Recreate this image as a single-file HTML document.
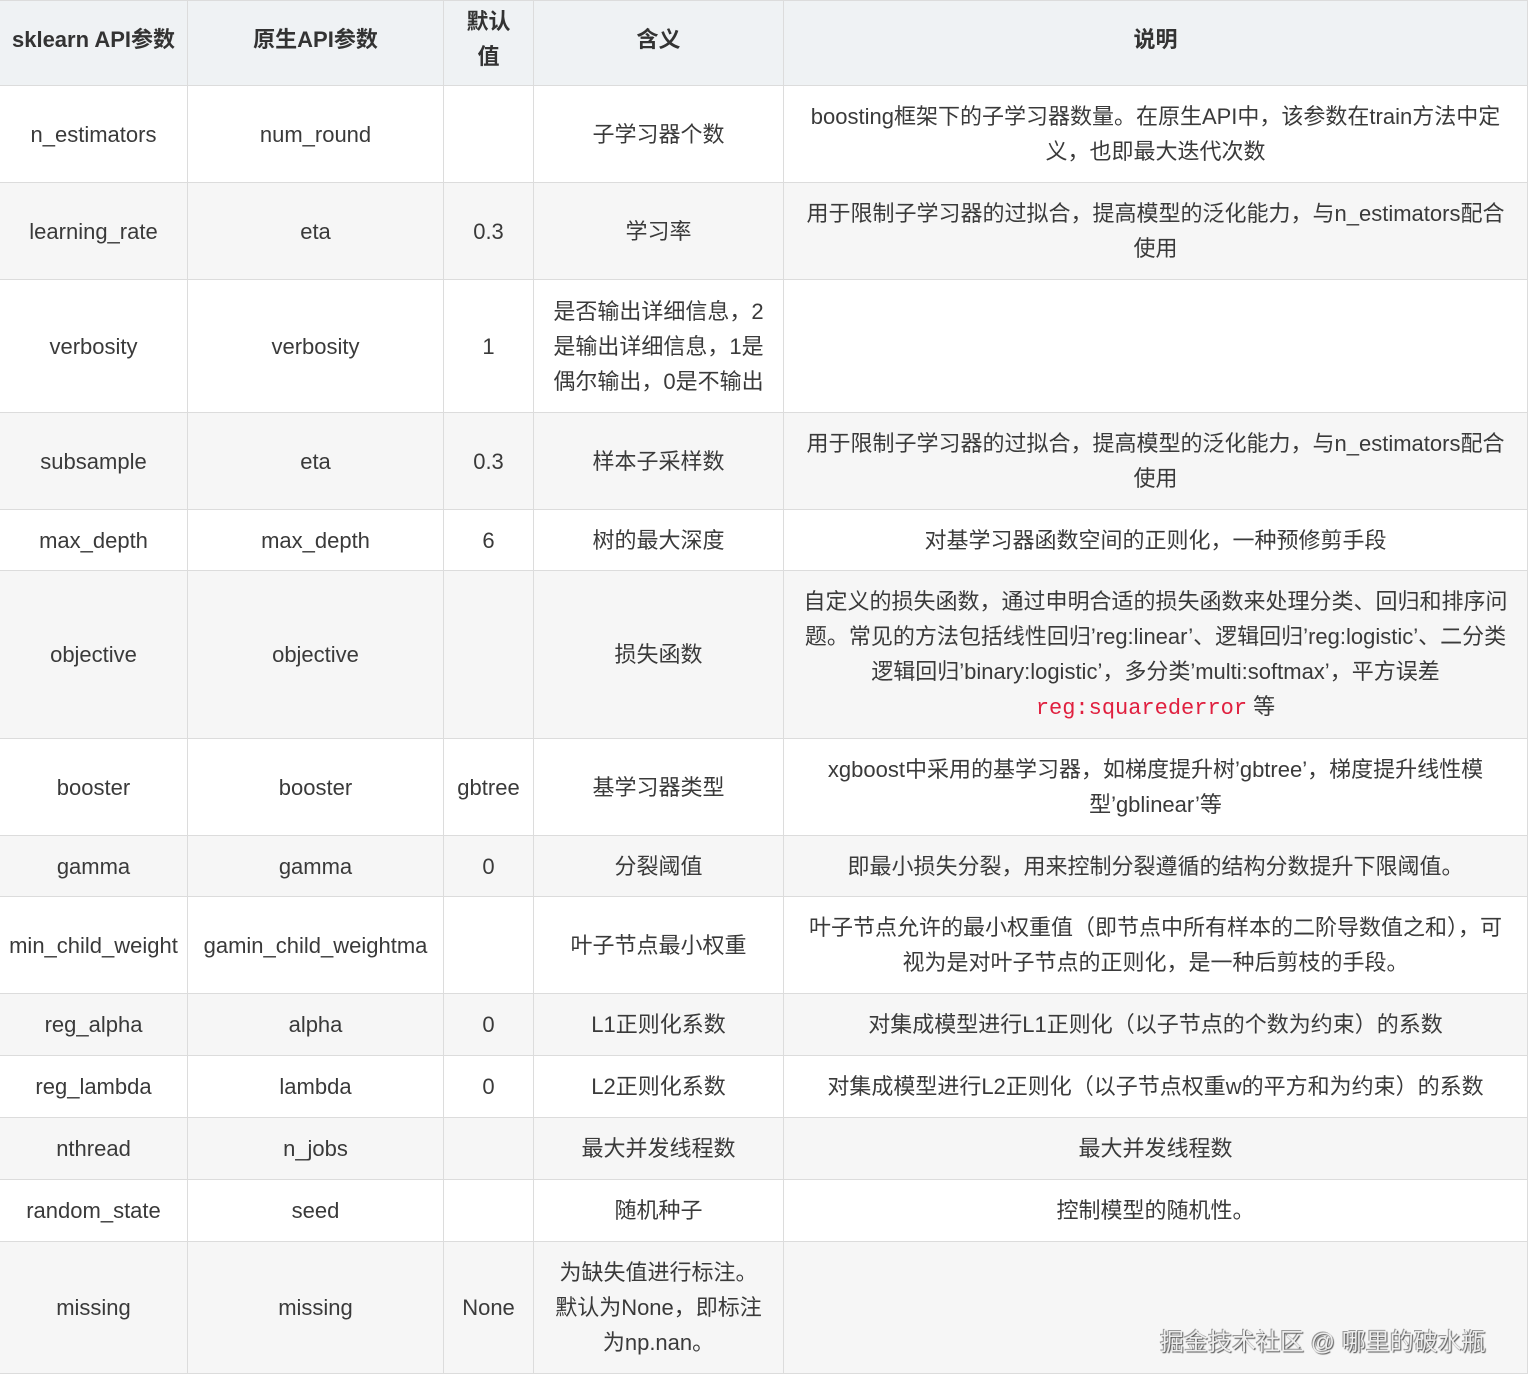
<!DOCTYPE html>
<html><head><meta charset="utf-8"><style>
body{margin:0;background:#fff;width:1530px;height:1386px;overflow:hidden;font-family:"Liberation Sans","Noto Sans CJK SC",sans-serif;}
table{border-collapse:collapse;table-layout:fixed;width:1528px;position:absolute;left:-1px;top:0;}
td,th{border:1px solid #dcdcdc;text-align:center;vertical-align:middle;font-size:22px;color:#3a3a3a;line-height:35px;padding:0 12px;}
th{background:#eff2f4;font-weight:bold;color:#333;padding-bottom:8px;}
tr:nth-child(odd) td{background:#f6f6f6;}
tr:nth-child(even) td{background:#fff;}
td:first-child,th:first-child{padding-left:2px;padding-right:2px;}
td:nth-child(2){padding:0 4px;}
td:nth-child(3),th:nth-child(3){padding-left:4px;padding-right:4px;}
code{font-family:"Liberation Mono",monospace;color:#e0203f;font-size:22px;}
.wm{position:absolute;left:1160px;top:1322px;font-size:24px;color:#eee;text-shadow:1px 1px 1px #555,-1px -1px 0 #999;font-family:"Liberation Sans","Noto Sans CJK SC",sans-serif;}
</style></head><body>
<table>
<colgroup><col style="width:188px"><col style="width:256px"><col style="width:90px"><col style="width:250px"><col style="width:744px"></colgroup>
<tr style="height:85px"><th>sklearn API参数</th><th>原生API参数</th><th>默认<br>值</th><th>含义</th><th>说明</th></tr>
<tr style="height:97px"><td>n_estimators</td><td>num_round</td><td></td><td>子学习器个数</td><td>boosting框架下的子学习器数量。在原生API中，该参数在train方法中定义，也即最大迭代次数</td></tr>
<tr style="height:97px"><td>learning_rate</td><td>eta</td><td>0.3</td><td>学习率</td><td>用于限制子学习器的过拟合，提高模型的泛化能力，与n_estimators配合使用</td></tr>
<tr style="height:133px"><td>verbosity</td><td>verbosity</td><td>1</td><td>是否输出详细信息，2是输出详细信息，1是偶尔输出，0是不输出</td><td></td></tr>
<tr style="height:97px"><td>subsample</td><td>eta</td><td>0.3</td><td>样本子采样数</td><td>用于限制子学习器的过拟合，提高模型的泛化能力，与n_estimators配合使用</td></tr>
<tr style="height:61px"><td>max_depth</td><td>max_depth</td><td>6</td><td>树的最大深度</td><td>对基学习器函数空间的正则化，一种预修剪手段</td></tr>
<tr style="height:168px"><td>objective</td><td>objective</td><td></td><td>损失函数</td><td>自定义的损失函数，通过申明合适的损失函数来处理分类、回归和排序问题。常见的方法包括线性回归’reg:linear’、逻辑回归’reg:logistic’、二分类逻辑回归’binary:logistic’，多分类’multi:softmax’，平方误差<br><code>reg:squarederror</code> 等</td></tr>
<tr style="height:97px"><td>booster</td><td>booster</td><td>gbtree</td><td>基学习器类型</td><td>xgboost中采用的基学习器，如梯度提升树’gbtree’，梯度提升线性模型’gblinear’等</td></tr>
<tr style="height:61px"><td>gamma</td><td>gamma</td><td>0</td><td>分裂阈值</td><td>即最小损失分裂，用来控制分裂遵循的结构分数提升下限阈值。</td></tr>
<tr style="height:97px"><td>min_child_weight</td><td>gamin_child_weightma</td><td></td><td>叶子节点最小权重</td><td>叶子节点允许的最小权重值（即节点中所有样本的二阶导数值之和），可<br>视为是对叶子节点的正则化，是一种后剪枝的手段。</td></tr>
<tr style="height:62px"><td>reg_alpha</td><td>alpha</td><td>0</td><td>L1正则化系数</td><td>对集成模型进行L1正则化（以子节点的个数为约束）的系数</td></tr>
<tr style="height:62px"><td>reg_lambda</td><td>lambda</td><td>0</td><td>L2正则化系数</td><td>对集成模型进行L2正则化（以子节点权重w的平方和为约束）的系数</td></tr>
<tr style="height:62px"><td>nthread</td><td>n_jobs</td><td></td><td>最大并发线程数</td><td>最大并发线程数</td></tr>
<tr style="height:62px"><td>random_state</td><td>seed</td><td></td><td>随机种子</td><td>控制模型的随机性。</td></tr>
<tr style="height:132px"><td>missing</td><td>missing</td><td>None</td><td>为缺失值进行标注。<br>默认为None，即标注<br>为np.nan。</td><td></td></tr>
</table>
<div class="wm">掘金技术社区 @ 哪里的破水瓶</div>
</body></html>
